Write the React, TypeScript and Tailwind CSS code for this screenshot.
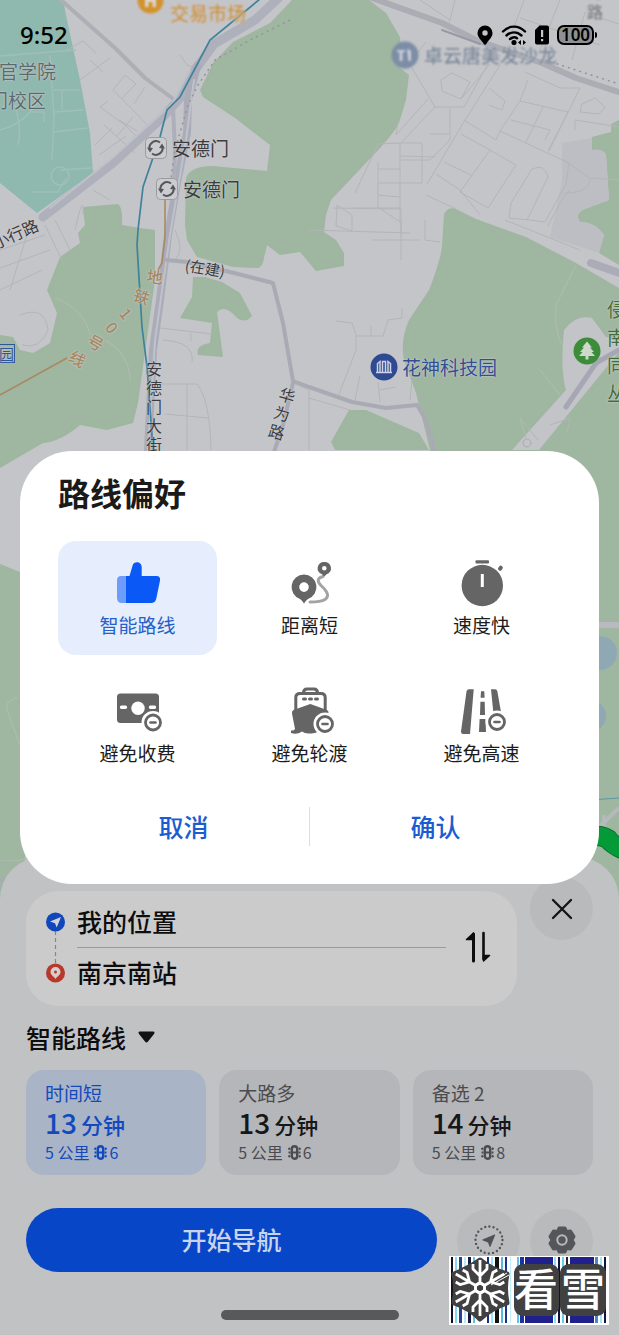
import React, { useState } from "react";

const CJK = "font-['Noto_Sans_CJK_SC','Noto_Sans',sans-serif]";

function MapCanvas() {
  return (
    <svg
      className="absolute inset-0 h-full w-full"
      viewBox="0 0 619 1335"
      preserveAspectRatio="xMidYMin slice"
      fill="none"
      aria-hidden="true"
    >
      <rect width="619" height="1335" fill="#c4c5c9" />

      {/* campus */}
      <path d="M0 0H63L67 20L80 80L90 133L93 173L37 213L0 183Z" fill="#8fb8af" />
      <g stroke="#9fbfba" strokeWidth="1.5">
        <path d="M0 56L76 50M50 55L54 118L52 160M54 90H80M54 112L84 110M53 132L88 128M37 98Q30 122 0 130M15 105Q22 128 18 145M32 192H58L66 178M60 170L92 168M44 122V112H30M62 90V110" />
        <circle cx="60" cy="176" r="9" />
      </g>

      {/* parks */}
      <g fill="#9fb7a0">
        <path d="M292 0L270 23L233 42L213 63L200 90L203 97L235 118L270 145L267 171L213 166Q190 166 186 178L185 225L187 240L197 257L233 267L258 268Q263 266 264 258L267 245L280 255L300 252L316 271L344 266V253L336 240L324 232L326 215L331 200L381 147Q396 130 399 123L406 100L409 75L399 67Q402 50 400 37L386 13L369 0Z" />
        <path d="M444 214Q448 206 456 209L476 219L526 237L576 263L619 288V1000H430V450L416 393L404 360Q400 340 409 320L429 290Q440 262 442 247Z" />
        <path d="M83 207L118 204Q123 207 122 225L140 228L155 230V280L138 403L133 423L107 430L80 425Q60 442 43 443L0 468V335L13 337L20 350L33 353L50 343L57 313L47 290L60 257L80 243L78 233L85 225Z" />
        <path d="M193 277H205L222 282L240 293L252 316Q245 324 237 318Q225 304 217 312L223 357L198 355Q195 345 210 343L212 323L180 318L192 297Z" />
        <path d="M349 410H366L419 433L429 450H335L331 442Z" />
        <path d="M619 120L611 124V132L592 137V150Q604 149 606 155L609 200L582 210Q575 216 580 222Q595 222 604 235L599 253L619 265Z" />
        <path d="M0 564L25 574V1000H0Z" />
      </g>
      <path d="M562 143L592 138V150Q604 149 606 155L609 200L582 210Q575 216 580 222Q595 222 604 235L599 253L550 237L557 205L562 180Z" fill="#bdbec3" />
      <path d="M512 450L566 390Q560 370 564 330Q576 314 592 318L606 337L619 340V352L539 450Z" fill="#c2c4c8" />

      {/* small streets */}
      <g stroke="#b4b4ba" strokeWidth="1">
        <path d="M67 50L83 41L96 53M80 80L110 58M90 60L103 72M113 90L125 75L136 84L122 98M113 90L133 110L152 130M100 107L125 125L140 140M100 107L108 101M104 125L135 153M117 136L133 117M119 120L137 131M95 145L112 128M99 155L126 136M134 104L145 87M180 55L187 65L197 68" />
        <path d="M412 68L435 107M435 107H464L488 64M435 107L401 143L378 144L355 193M428 99L396 135L398 121M450 108V140L430 160H401M430 134H450M442 91L461 99L470 82L452 73L441 80ZM461 99L490 64M500 65L465 120L427 184M378 162V207L400 222V143M401 143H422V183H378M378 169H401M378 195L400 197M333 208L401 209V260M337 205L352 215V231L336 226ZM352 208H401M401 156L435 157" />
        <path d="M464 120L496 140L500 131L569 163L566 184L545 222L530 220L509 218L511 203L532 169Q545 163 548 177L527 220M461 134L490 150L516 165L488 208L460 192L490 150M444 162L471 175M436 174L460 190L480 215M426 195L456 209M500 131L520 101L568 112L548 151M580 88L549 151M543 107L526 142M511 120L550 130L545 140M489 88L505 101L502 110L489 105M520 101L528 80M525 72L560 88L580 88M582 104L595 98L605 107L599 114L580 112ZM575 130V120L619 127M563 160L590 178L619 180M565 193Q590 193 590 178M548 226Q560 200 570 190" />
        <path d="M524 0L510 38M560 0L540 50M520 18L600 45M600 18L619 24M420 0L450 20M455 0L448 28M410 62L426 42M585 12L572 60" />
        <path d="M336 321L352 323L356 335V350L338 397M356 336H383L388 320L402 318V308M371 336V326M309 230L410 233M401 220V235M425 220V240L440 242M372 240H420M360 376L355 400M378 382L380 402M379 390L396 387M412 380L410 400" />
        <path d="M160 328L212 334M191 333V341M163 340Q195 342 192 362M160 384H197Q210 400 211 450M187 384V450M165 414L208 418M0 250L45 235M0 268L50 250M0 290L42 270M55 220L70 250M45 225L62 260M20 315Q45 305 48 330Q40 350 22 345M30 225L10 290M83 215Q84 190 75 230M93 190L110 200M175 230Q185 250 175 260" />
        <path d="M293 383L309 390V450M309 398L350 410M505 220L580 250M520 418L538 440M550 425L570 418L567 433" />
      </g>
      <g stroke="#adbbae" strokeWidth="1.2">
        <path d="M576 265L556 305Q554 330 562 345M55 298Q85 310 90 335M105 340Q130 355 130 380M540 370L560 395M520 418L526 438M18 698Q2 700 9 715L20 745M0 860Q15 862 30 858" />
      </g>

      {/* trunk roads */}
      <g strokeLinejoin="round" strokeLinecap="round">
        <path d="M61 0L115 48L145 78L172 98" stroke="#aeafb6" strokeWidth="4" />
        <path d="M285 -8L255 20L214 44L195 70L180 98L163 117L113 163L43 217" stroke="#aeb0bb" strokeWidth="9" />
        <path d="M190 70L172 104L110 160L50 208" stroke="#bfc1ca" strokeWidth="2" />
        <path d="M197 66L188 100L187 133L177 183L168 235L160 300L153 350L148 450" stroke="#aaacb8" strokeWidth="8" />
        <path d="M194 80L186 140L170 235L155 340L148 450" stroke="#c0c2cb" strokeWidth="2" />
        <path d="M173 108L175 150L174 180" stroke="#adafba" strokeWidth="4" />
        <path d="M167 260L187 262L230 272L273 283L283 323L293 381L309 387L352 402L386 408L417 405L426 420L436 455M293 383L283 425L273 455" stroke="#a9aab4" strokeWidth="4" />
        <path d="M372 -2L442 23L476 40L542 63L576 78L625 94" stroke="#abacb4" strokeWidth="6" />
        <path d="M442 30L480 44" stroke="#989aa3" strokeWidth="2" />
        <path d="M625 275L591 263" stroke="#abacb8" strokeWidth="8" />
        <path d="M566 407L596 363L619 350" stroke="#a6a7b4" strokeWidth="5" />
        <circle cx="527" cy="443" r="4" stroke="#acadb4" />
      </g>
      <path d="M290 20L250 40L215 60L198 85L188 105L175 150L170 185M545 60L585 73L619 84" stroke="#92949b" strokeWidth="1.5" strokeDasharray="2 4" />

      {/* metro lines */}
      <path d="M260 -1L210 40L180 97L167 110L160 137L143 187L138 230L137 245L142 327L147 367L153 450" stroke="#40829a" strokeWidth="1.7" />
      <path d="M165 200V237L162 263L158 270M67 358L0 395" stroke="#a88a62" strokeWidth="1.6" />

      {/* around the lower half */}
      <path d="M590 625H619" stroke="#b9babf" strokeWidth="6" />
      <circle cx="600" cy="653" r="17" fill="#8fa9b4" />
      <circle cx="590" cy="716" r="16" fill="#8fa9b4" />
      <path d="M590 800L619 798" stroke="#5f95a5" strokeWidth="1.2" />
      <path d="M596 830L619 808M604 830V815" stroke="#b6b9b9" strokeWidth="4" />
      <path d="M590 837Q600 834 608 839Q614 847 632 853" stroke="#0d6f2d" strokeWidth="20" />
      <path d="M590 837Q600 834 608 839Q614 847 632 853" stroke="#049a38" strokeWidth="18" />
      <path d="M0 880L30 876M0 888L30 884" stroke="#a9aab6" strokeWidth="3" />
    </svg>
  );
}

function TransferBadge() {
  return (
    <svg className="size-[22px] shrink-0" viewBox="0 0 22 22" fill="none" aria-hidden="true">
      <rect x="0.5" y="0.5" width="21" height="21" rx="4" fill="#cbcccf" stroke="#9b9ca0" />
      <path d="M4.700 12.500A6.600 6.600 0 0 1 15 5.500M17.300 9.500A6.600 6.600 0 0 1 7 16.500" stroke="#55565a" strokeWidth="2" />
      <path d="M2 10.500L8 11L5 15.500ZM20 11.500L14 11L17 6.500Z" fill="#55565a" />
    </svg>
  );
}

const halo = "[text-shadow:0_0_2px_#cfd0d3,0_0_1px_#cfd0d3]";

function MapLabels() {
  return (
    <div className={`absolute inset-0 overflow-hidden text-[19px] leading-[28px] whitespace-nowrap text-[#3b3c40] ${halo}`}>
      <div className="absolute top-[-13px] left-[137px] flex items-start gap-[6px] text-[#cb9244] blur-[1px]">
        <svg className="size-[27px]" viewBox="0 0 27 27" aria-hidden="true">
          <circle cx="13.500" cy="13.500" r="13" fill="#d2922f" />
          <path d="M8 10H19V20H15.500V15H11.500V20H8Z" fill="#dcd6ca" />
        </svg>
        <span className="mt-[12px] font-medium">交易市场</span>
      </div>
      <div className="absolute top-[41px] left-[391px] flex items-center gap-[5px] text-[#7b8798] blur-[1px]">
        <svg className="size-[28px]" viewBox="0 0 28 28" aria-hidden="true">
          <circle cx="14" cy="14" r="13.500" fill="#7c8da6" />
          <path d="M6 9H14V11H11.500V20H8.500V11H6ZM16 8L20 9.500V20H17.500Z" fill="#c9ced6" />
        </svg>
        <span className="font-medium">卓云唐美发沙龙</span>
      </div>
      <span className="absolute top-[57px] left-[-1px] text-[#5c6a6c]">官学院</span>
      <span className="absolute top-[86px] left-[-11px] text-[#5c6a6c]">门校区</span>
      <div className="absolute top-[134px] left-[145px] flex items-center gap-[5px]">
        <TransferBadge />
        安德门
      </div>
      <div className="absolute top-[175px] left-[156px] flex items-center gap-[5px]">
        <TransferBadge />
        安德门
      </div>
      <span className="absolute top-[219px] left-[-9px] -rotate-[24deg] text-[16px]">小行路</span>
      <span className="absolute top-[254px] left-[185px] rotate-[9deg] text-[15px]">(在建)</span>
      <span className="absolute top-[-39px] left-[587px] w-[16px] text-[16px] leading-[20px] whitespace-normal text-[#6a6b70] blur-[1px]">华为路</span>
      <span className="absolute top-[359px] left-[146px] w-[16px] text-[16px] leading-[19px] whitespace-normal">安德门大街</span>
      <span className="absolute top-[385px] left-[274px] w-[16px] rotate-[16deg] text-[16px] leading-[19px] whitespace-normal">华为路</span>
      <div className="text-[16px] leading-[16px] font-medium text-[#a58760]">
        <span className="absolute top-[268px] left-[147px] rotate-[8deg]">地</span>
        <span className="absolute top-[288px] left-[134px] rotate-[20deg]">铁</span>
        <span className="absolute top-[305px] left-[122px] rotate-[50deg]">1</span>
        <span className="absolute top-[319px] left-[108px] rotate-[50deg]">0</span>
        <span className="absolute top-[334px] left-[88px] rotate-[30deg]">号</span>
        <span className="absolute top-[350px] left-[70px] rotate-[30deg]">线</span>
      </div>
      <span className="absolute top-[344px] left-[-2px] border border-[#2f5597] text-[15px] leading-[17px] text-[#2f5597]">园</span>
      <div className="absolute top-[353px] left-[370px] flex items-center gap-[4px] text-[#324e93]">
        <svg className="size-[28px]" viewBox="0 0 28 28" aria-hidden="true">
          <circle cx="14" cy="14" r="13.500" fill="#2f4a93" />
          <path d="M7.500 19V10.500L10 8.500V19M12.500 19V8.500H15.500V19M18 19V8.500L20.500 10.500V19M6 19.500H22" stroke="#ccd2e2" strokeWidth="1.500" fill="none" />
        </svg>
        花神科技园
      </div>
      <svg className="absolute top-[337px] left-[573px] size-[28px]" viewBox="0 0 28 28" aria-hidden="true">
        <circle cx="14" cy="14" r="13.500" fill="#3d8c3a" />
        <path d="M14 4.500L19 10.500H17L21 15H18.500L22 19H15.500V22.500H12.500V19H6L9.500 15H7L11 10.500H9Z" fill="#cfd8cc" />
      </svg>
      <span className="absolute top-[295px] left-[607px] w-[19px] whitespace-normal text-[#3f6e3d]">侵南同丛</span>
    </div>
  );
}

function StatusBar() {
  return (
    <header className="relative flex h-[70px] items-center justify-between pr-[22px] pl-[20px] text-black">
      <time className="font-['Noto_Sans',sans-serif] text-[24px] leading-[32px] font-medium">9:52</time>
      <div className="flex items-center gap-[8px]">
        <svg className="h-[20px] w-[16px]" viewBox="0 0 16 20" aria-label="定位">
          <path fillRule="evenodd" d="M8 0.500A7.500 7.500 0 0 0 0.500 8C0.500 12 3.500 14 5.500 17Q7 20 8 20T10.500 17C12.500 14 15.500 12 15.500 8A7.500 7.500 0 0 0 8 0.500ZM8 5.300A2.700 2.700 0 1 1 8 10.700A2.700 2.700 0 0 1 8 5.300Z" fill="black" />
        </svg>
        <svg className="h-[20px] w-[26px]" viewBox="0 0 26 20" fill="none" stroke="black" strokeWidth="2.400" strokeLinecap="round" aria-label="无线网络">
          <path d="M2 6.500C8.500 0 17.500 0 24 6.500M5.500 10.500C10 6.300 16 6.300 20.500 10.500M9 14Q13 10.800 16 13.200" />
          <circle cx="13" cy="17.500" r="1.400" fill="black" />
          <path d="M20 15V20L17 17.500ZM22 15V20L25 17.500Z" fill="black" stroke="none" />
        </svg>
        <svg className="h-[20px] w-[14px]" viewBox="0 0 14 20" aria-label="SIM 卡">
          <path fillRule="evenodd" d="M4.500 0.500H12Q14 0.500 14 2.500V17.500Q14 19.500 12 19.500H2Q0 19.500 0 17.500V5ZM6 5V12H8.200V5ZM6 14V16.200H8.200V14Z" fill="black" />
        </svg>
        <div className="flex items-center gap-[1px]">
          <span className="flex h-[20px] w-[37px] items-center justify-center rounded-[7px] border-2 border-black bg-[#8f9093] font-['Noto_Sans',sans-serif] text-[17px] leading-[16px] font-semibold">
            100
          </span>
          <span className="h-[6px] w-[2px] rounded-r bg-black" />
        </div>
      </div>
    </header>
  );
}

const G = "#656565";

function MinusBadge({ x, y }: { x: number; y: number }) {
  return (
    <g>
      <circle cx={x} cy={y} r="11.5" fill="#fff" />
      <circle cx={x} cy={y} r="7.5" fill="none" stroke={G} strokeWidth="2.800" />
      <path d={`M${x - 2.500} ${y}H${x + 2.500}`} stroke={G} strokeWidth="2.600" strokeLinecap="round" />
    </g>
  );
}

const optionIcons: Record<string, React.ReactNode> = {
  smart: (
    <>
      <path d="M12 17H7Q3 17 3 21.500V39Q3 44 8 44H12Z" fill="#6d9cfa" />
      <path d="M12 17H15.500L18.600 6.500C19.800 2 27.700 2 27.700 8.500V17H42.500Q46.700 17 46 21.500L42.300 39.500Q41.300 44 37 44H12Z" fill="#0a59f7" />
    </>
  ),
  distance: (
    <>
      <path d="M37 17.500C31 19 31 22.500 35 26.500C41 32 44 37 39 40.500Q35 43 24 43" stroke="#a3a3a3" strokeWidth="3" strokeLinecap="round" fill="none" />
      <path fillRule="evenodd" d="M18 15.500A12.600 12.600 0 0 0 14 40Q16 41 18 44.500Q20 41 22 40A12.600 12.600 0 0 0 18 15.500ZM18 23.300A4.800 4.800 0 1 1 18 32.900A4.800 4.800 0 0 1 18 23.300Z" fill={G} />
      <path fillRule="evenodd" d="M38.300 3A6.300 6.300 0 0 0 36 15.300L38.300 17.500L40.600 15.300A6.300 6.300 0 0 0 38.300 3ZM38.300 7A2.300 2.300 0 1 1 38.300 11.600A2.300 2.300 0 0 1 38.300 7Z" fill={G} />
    </>
  ),
  fast: (
    <>
      <rect x="17.500" y="1.300" width="13.500" height="3.200" rx="1" fill={G} />
      <circle cx="24.300" cy="26.500" r="20.700" fill={G} />
      <path d="M24.300 15V28" stroke="#fff" strokeWidth="3" />
      <path d="M42 9.700L42.800 8.700" stroke={G} strokeWidth="4" strokeLinecap="round" />
    </>
  ),
  toll: (
    <>
      <rect x="3" y="6.500" width="42" height="29.500" rx="3.500" fill={G} />
      <circle cx="24" cy="21.300" r="6.700" fill="#fff" />
      <path d="M7.500 20.300H11.500M36.500 20.300H40.500" stroke="#fff" strokeWidth="3.400" strokeLinecap="round" />
      <MinusBadge x={39} y={35.5} />
    </>
  ),
  ferry: (
    <>
      <path d="M9.800 23V10.500Q9.800 6.500 14 6.500H35Q39.200 6.500 39.200 10.500V23M17.500 6Q17.500 2 21 2H28Q31.500 2 31.500 6" stroke={G} strokeWidth="3" fill="none" />
      <path d="M17.500 12H19.500M23.500 12H25.500M29.500 12H31.500" stroke={G} strokeWidth="3" strokeLinecap="round" />
      <path d="M24.300 17L41 23Q43 24 42.500 26.500L39 43Q42 44 43.500 44V46.500Q37 48 32.500 44.500Q28 47 24 46.500Q19 47 16 44.500Q11 48 5 46V43.500Q8 44 9 42L6 26.500Q5.500 24 7.500 23Z" fill={G} />
      <MinusBadge x={39} y={37} />
    </>
  ),
  highway: (
    <>
      <path d="M11 2.300H15.700L12 47H5Q3 47 3 44.500L8.500 4.500Q9 2.300 11 2.300Z" fill={G} />
      <path d="M23 4.300H26.300L26.600 10.700H22.600ZM22.400 14.700H26.700L27 28H22ZM21.600 32H27.500L28 45H21Z" fill={G} />
      <path d="M33 2.300H37Q39 2.300 39.400 4.500L43 25H35.300Z" fill={G} />
      <MinusBadge x={39} y={35} />
    </>
  ),
};

const options = [
  { id: "smart", label: "智能路线" },
  { id: "distance", label: "距离短" },
  { id: "fast", label: "速度快" },
  { id: "toll", label: "避免收费" },
  { id: "ferry", label: "避免轮渡" },
  { id: "highway", label: "避免高速" },
];

function PreferenceDialog() {
  const [selected, setSelected] = useState("smart");
  return (
    <section
      role="dialog"
      aria-labelledby="pref-title"
      className="absolute inset-x-[20px] bottom-[451px] rounded-[52px] bg-white px-[38px] pt-[21px] pb-[32px]"
    >
      <h2 id="pref-title" className="text-[32px] leading-[40px] font-bold text-[#1a1a1a]">路线偏好</h2>
      <div className="mt-[29px] grid grid-cols-3 gap-x-[13px] gap-y-[14px]">
        {options.map((o) => {
          const on = o.id === selected;
          return (
            <button
              key={o.id}
              type="button"
              aria-pressed={on}
              onClick={() => setSelected(o.id)}
              className={`flex h-[114px] flex-col items-center gap-[4px] rounded-[18px] pt-[18px] text-[19px] leading-[28px] ${
                on ? "bg-[#e6edfc] text-[#2460c9]" : "text-[#1c1c1c]"
              }`}
            >
              <svg className="size-[48px]" viewBox="0 0 48 48" aria-hidden="true">{optionIcons[o.id]}</svg>
              {o.label}
            </button>
          );
        })}
      </div>
      <div className="mt-[17px] flex items-center text-[25px] leading-[52px] font-medium text-[#1d5cd0]">
        <button type="button" className="flex-1">取消</button>
        <span className="h-[39px] w-px bg-[#dedede]" />
        <button type="button" className="flex-1">确认</button>
      </div>
    </section>
  );
}

function TrafficLight() {
  return (
    <svg className="h-[15px] w-[13px]" viewBox="0 0 13 15" fill="none" stroke="currentColor" aria-label="红绿灯">
      <rect x="3.800" y="1.200" width="5.400" height="12.600" rx="2.700" strokeWidth="2.400" />
      <path d="M4 7.500H9" strokeWidth="2" />
      <path d="M0.500 3L2 4.500M0.500 7.500H2.500M0.500 12L2 10.500M12.500 3L11 4.500M12.500 7.500H10.500M12.500 12L11 10.500" strokeWidth="2.200" />
    </svg>
  );
}

const routes = [
  { name: "时间短", minutes: 13, km: 5, lights: 6 },
  { name: "大路多", minutes: 13, km: 5, lights: 6 },
  { name: "备选 2", minutes: 14, km: 5, lights: 8 },
];

function RouteSheet() {
  const [active, setActive] = useState(0);
  return (
    <section className="relative rounded-t-[42px] bg-[#c1c2c4] px-[26px] pt-[20px] pb-[15px]">
      <div className="flex items-start gap-[13px]">
        <div className="mt-[14px] flex flex-1 items-center gap-[19px] rounded-[32px] bg-[#cbcbcb] pt-[12px] pr-[26px] pb-[16px] pl-[20px]">
          <div className="flex flex-1 items-center gap-[12px]">
            <svg className="h-[72px] w-[19px] shrink-0" viewBox="0 0 19 72" fill="none" aria-hidden="true">
              <path d="M9.500 20V52" stroke="#85868a" strokeWidth="1.200" strokeDasharray="4 3" />
              <circle cx="9.500" cy="11" r="9.500" fill="#1146bd" />
              <path d="M4 10.500L15 6L10.700 16.500L9 12.300Z" fill="#d0d3dc" />
              <circle cx="9.500" cy="62" r="9.500" fill="#b63a2c" />
              <path d="M9.500 56A5 5 0 0 0 4.500 61C4.500 64 8 65.500 9.500 68C11 65.500 14.500 64 14.500 61A5 5 0 0 0 9.500 56Z" fill="#d6cfcd" />
              <circle cx="9.500" cy="61" r="1.500" fill="#b63a2c" />
            </svg>
            <div className="min-w-0 flex-1 text-[25px] leading-[36px] font-medium text-[#0d0d0e]">
              <input aria-label="起点" defaultValue="我的位置" className="block h-[36px] w-full bg-transparent outline-none" />
              <div className="mt-[8px] mb-[6px] h-px bg-[#9b9b9c]" />
              <input aria-label="终点" defaultValue="南京南站" className="block h-[36px] w-full bg-transparent outline-none" />
            </div>
          </div>
          <button type="button" aria-label="交换起终点">
            <svg className="h-[32px] w-[26px]" viewBox="0 0 26 32" fill="none" stroke="#0c0c0d" strokeWidth="3" strokeLinecap="round" aria-hidden="true">
              <path d="M8.500 3V30" />
              <path d="M18.500 2V28" strokeWidth="2.600" />
              <path d="M8.500 2L1.500 8.500H8.500ZM18.500 30L24.500 24.500H18.500Z" fill="#0c0c0d" strokeWidth="1.500" strokeLinejoin="round" />
            </svg>
          </button>
        </div>
        <button type="button" aria-label="关闭" className="flex size-[63px] items-center justify-center rounded-full bg-[#b9babc]">
          <svg className="size-[22px]" viewBox="0 0 22 22" stroke="#121314" strokeWidth="2.300" strokeLinecap="round" aria-hidden="true">
            <path d="M2 2L20 20M20 2L2 20" />
          </svg>
        </button>
      </div>

      <button type="button" className="mt-[13px] flex items-center gap-[12px] text-[25px] leading-[36px] font-medium text-[#0d0d0e]">
        智能路线
        <svg className="h-[12px] w-[17px]" viewBox="0 0 17 12" aria-hidden="true">
          <path d="M2 0.500H15Q17.500 0.800 16 3L10 10.500Q8.500 12.500 7 10.500L1 3Q-0.500 0.800 2 0.500Z" fill="#111213" />
        </svg>
      </button>

      <div className="mt-[15px] grid grid-cols-3 gap-[13px]">
        {routes.map((r, i) => {
          const on = i === active;
          return (
            <button
              key={r.name}
              type="button"
              aria-pressed={on}
              onClick={() => setActive(i)}
              className={`rounded-[18px] pt-[11px] pb-[12px] pl-[19px] text-left ${
                on ? "bg-[#a9b5c6] text-[#1449bd]" : "bg-[#b5b6ba] text-[#4b4c4f]"
              }`}
            >
              <span className="block h-[24px] text-[19px] leading-[24px]">{r.name}</span>
              <span className={`flex h-[36px] items-baseline gap-[4px] leading-[34px] font-medium ${on ? "" : "text-[#161718]"}`}>
                <span className="text-[28px]">{r.minutes}</span>
                <span className="text-[22px]">分钟</span>
              </span>
              <span className="flex h-[22px] items-center gap-[5px] text-[16px] leading-[22px]">
                {r.km} 公里
                <span className="flex items-center gap-[2px]">
                  <TrafficLight />
                  {r.lights}
                </span>
              </span>
            </button>
          );
        })}
      </div>

      <div className="mt-[33px] flex items-center gap-[10px]">
        <button type="button" className="mr-[10px] h-[64px] flex-1 rounded-full bg-[#0846c8] text-[25px] font-medium text-[#c8d3ec]">
          开始导航
        </button>
        <button type="button" aria-label="模拟导航" className="flex size-[63px] items-center justify-center rounded-full bg-[#b9babc]">
          <svg className="size-[30px]" viewBox="0 0 30 30" fill="none" aria-hidden="true">
            <circle cx="15" cy="15" r="13.500" stroke="#55565a" strokeWidth="2.400" strokeLinecap="round" strokeDasharray="0 4.241" />
            <path d="M8.500 14.500L20.500 9.500Q21.500 9.300 21 10.500L16.500 21.500Q16 22.500 15.500 21.500L14 17.500L8.800 15.500Q8 15 8.500 14.500Z" fill="#515255" />
          </svg>
        </button>
        <button type="button" aria-label="设置" className="flex size-[63px] items-center justify-center rounded-full bg-[#b9babc]">
          <svg className="size-[30px]" viewBox="0 0 30 30" fill="none" aria-hidden="true">
            <path d="M12 3H18L19.500 6.500L23.500 6L27 11.500L25 15L27 18.500L23.500 24L19.500 23.500L18 27H12L10.500 23.500L6.500 24L3 18.500L5 15L3 11.500L6.500 6L10.500 6.500Z" fill="#55565a" stroke="#55565a" strokeWidth="3" strokeLinejoin="round" />
            <circle cx="15" cy="15" r="4.700" stroke="#b9babc" strokeWidth="2" />
          </svg>
        </button>
      </div>
      <div className="mx-auto mt-[38px] h-[10px] w-[178px] rounded-full bg-[#58595b]" />
    </section>
  );
}

const stripes: [number, number, string][] = [
  [2, 2, "#101020"], [6, 2, "#7fdcf0"], [10, 3, "#2a3f8f"], [15, 2, "#bfe9f5"], [19, 3, "#141a40"],
  [24, 2, "#5cc4e6"], [38, 2, "#1b2d8c"], [42, 2, "#9be6f4"], [46, 4, "#111"], [52, 2, "#57b9de"], [56, 2, "#20308a"],
  [61, 1, "#bdeef8"], [68, 2, "#58c7ea"], [71, 4, "#2030a0"], [76, 28, "#20208c"], [105, 2, "#8fe0f4"],
  [109, 2, "#10103a"], [113, 2, "#6bcdec"], [117, 2, "#222"], [121, 24, "#20208c"], [146, 3, "#4d86c8"],
  [151, 2, "#a0e8f5"], [155, 2, "#141440"],
];

function Watermark() {
  return (
    <div className="pointer-events-none absolute right-[10px] bottom-[10px]">
      <svg className="h-[69px] w-[160px]" viewBox="0 0 160 69" aria-hidden="true">
        <rect width="160" height="69" fill="#fff" />
        {stripes.map(([x, w, c]) => (
          <rect key={x} x={x} y="1" width={w} height="66" fill={c} />
        ))}
        <path d="M5 18Q20 12 31 4Q43 14 58 18Q55 32 58 47Q43 52 31 63Q20 52 5 47Q8 32 5 18Z" fill="#414141" stroke="#414141" strokeWidth="5" strokeLinejoin="round" />
        <rect x="65" y="8" width="45" height="52" rx="9" fill="#414141" />
        <rect x="111" y="8" width="46" height="52" rx="9" fill="#414141" />
        <g stroke="#fff" strokeWidth="2.800" fill="none" strokeLinejoin="round">
          {[0, 60, 120, 180, 240, 300].map((a) => (
            <path key={a} transform={`rotate(${a} 31 32)`} d="M31 26V4M31 20L24 13V8M31 20L38 13V8M26.500 29.500L31 26.700L35.500 29.500" />
          ))}
        </g>
        <path d="M40 27L58 17M42 29L60 19" stroke="#fff" strokeWidth="1" />
        <g fill="#fff" className={`${CJK} text-[44px] font-medium`}>
          <text x="65" y="50">看</text>
          <text x="112" y="50">雪</text>
        </g>
      </svg>
    </div>
  );
}

export default function App() {
  return (
    <main className={`relative flex min-h-screen flex-col justify-between overflow-hidden ${CJK}`}>
      <MapCanvas />
      <MapLabels />
      <StatusBar />
      <RouteSheet />
      <PreferenceDialog />
      <Watermark />
    </main>
  );
}
